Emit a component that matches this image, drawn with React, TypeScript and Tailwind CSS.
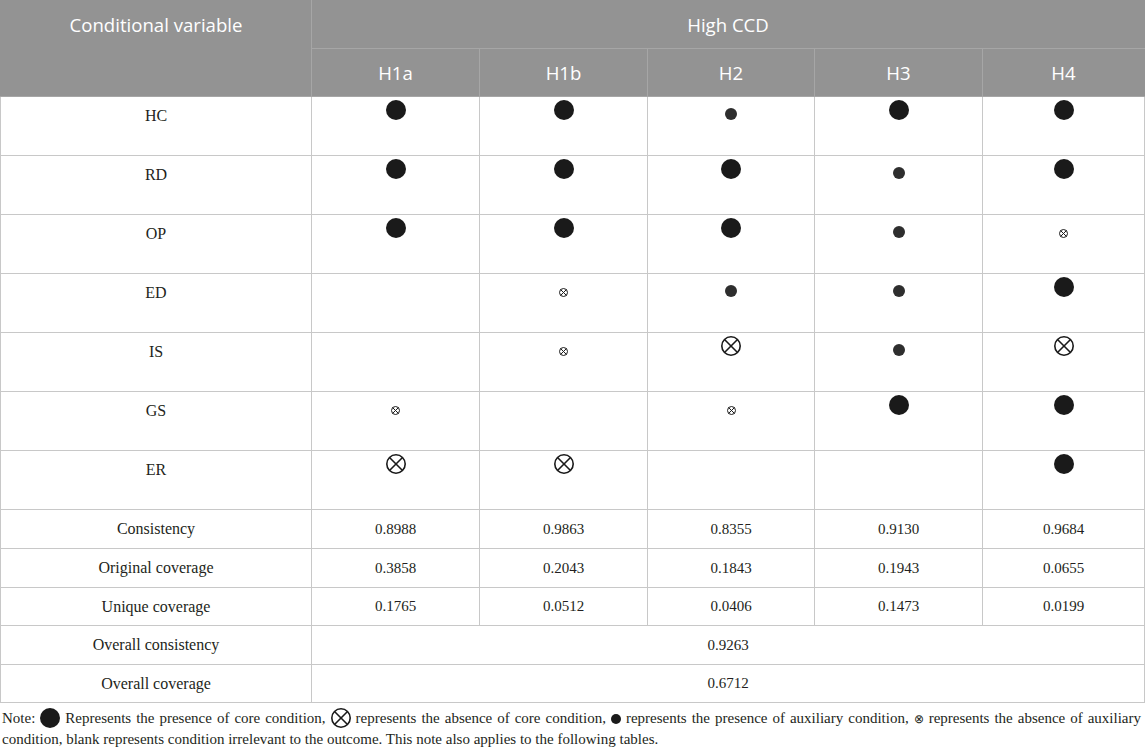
import React from "react";

type Sym = "B" | "s" | "X" | "x" | "";

const serif = "font-['Liberation_Serif','Times_New_Roman',serif]";
const sans = "font-['Open_Sans','Noto_Sans',sans-serif]";

function BigDot() {
  return <span className="inline-block w-[20px] h-[20px] rounded-full bg-[#1a1a1a] align-baseline" />;
}

function SmallDot() {
  return <span className="inline-block w-[12px] h-[12px] rounded-full bg-[#2e2e2e] align-baseline" />;
}

function CrossCircle({ size, stroke }: { size: number; stroke: number }) {
  const r = size / 2 - stroke / 2;
  const c = size / 2;
  const d = r * 0.7071;
  return (
    <svg width={size} height={size} viewBox={`0 0 ${size} ${size}`} className="inline-block align-baseline">
      <circle cx={c} cy={c} r={r} fill="none" stroke="#1a1a1a" strokeWidth={stroke} />
      <line x1={c - d} y1={c - d} x2={c + d} y2={c + d} stroke="#1a1a1a" strokeWidth={stroke} />
      <line x1={c + d} y1={c - d} x2={c - d} y2={c + d} stroke="#1a1a1a" strokeWidth={stroke} />
    </svg>
  );
}

function Symbol({ s }: { s: Sym }) {
  if (s === "B") return <BigDot />;
  if (s === "s") return <SmallDot />;
  if (s === "X") return <CrossCircle size={20} stroke={1.6} />;
  if (s === "x") return <CrossCircle size={9} stroke={1} />;
  return null;
}

const conditions: { name: string; cells: Sym[] }[] = [
  { name: "HC", cells: ["B", "B", "s", "B", "B"] },
  { name: "RD", cells: ["B", "B", "B", "s", "B"] },
  { name: "OP", cells: ["B", "B", "B", "s", "x"] },
  { name: "ED", cells: ["", "x", "s", "s", "B"] },
  { name: "IS", cells: ["", "x", "X", "s", "X"] },
  { name: "GS", cells: ["x", "", "x", "B", "B"] },
  { name: "ER", cells: ["X", "X", "", "", "B"] },
];

const stats = [
  { name: "Consistency", values: ["0.8988", "0.9863", "0.8355", "0.9130", "0.9684"], h: "h-[39px]" },
  { name: "Original coverage", values: ["0.3858", "0.2043", "0.1843", "0.1943", "0.0655"], h: "h-[39px]" },
  { name: "Unique coverage", values: ["0.1765", "0.0512", "0.0406", "0.1473", "0.0199"], h: "h-[38px]" },
];

const overall = [
  { name: "Overall consistency", value: "0.9263", h: "h-[39px]" },
  { name: "Overall coverage", value: "0.6712", h: "h-[38px]" },
];

const td = "border border-[#c8c8c8] text-center";

export default function App() {
  return (
    <div className="w-[1145px] bg-white text-[#231f20]">
      <table className={`w-[1145px] table-fixed border-collapse ${serif} text-[16px]`}>
        <colgroup>
          <col className="w-[311px]" />
          <col className="w-[168px]" />
          <col className="w-[168px]" />
          <col className="w-[167px]" />
          <col className="w-[168px]" />
          <col />
        </colgroup>
        <thead className={`${sans} text-white text-[18.6px] font-normal`}>
          <tr className="h-[48px] bg-[#939393]">
            <th rowSpan={2} className="border border-[#a6a6a6] border-l-[#939393] border-t-[#939393] align-top pt-[10px] font-normal leading-[28px]">
              Conditional variable
            </th>
            <th colSpan={5} className="border border-[#a6a6a6] border-t-[#939393] border-r-[#939393] font-normal">
              High CCD
            </th>
          </tr>
          <tr className="h-[48px] bg-[#939393]">
            {["H1a", "H1b", "H2", "H3", "H4"].map((h, i) => (
              <th key={h} className={`border border-[#a6a6a6] font-normal ${i === 4 ? "border-r-[#939393]" : ""}`}>
                {h}
              </th>
            ))}
          </tr>
        </thead>
        <tbody>
          {conditions.map((row) => (
            <tr key={row.name} className="h-[59px]">
              <td className={`${td} align-top pt-[8px] leading-[22px]`}>{row.name}</td>
              {row.cells.map((c, i) => (
                <td key={i} className={`${td} align-top`}>
                  <div className="flex h-[23px] items-end justify-center">
                    <Symbol s={c} />
                  </div>
                </td>
              ))}
            </tr>
          ))}
          {stats.map((row) => (
            <tr key={row.name} className={row.h}>
              <td className={td}>{row.name}</td>
              {row.values.map((v, i) => (
                <td key={i} className={`${td} text-[15px]`}>
                  {v}
                </td>
              ))}
            </tr>
          ))}
          {overall.map((row) => (
            <tr key={row.name} className={row.h}>
              <td className={td}>{row.name}</td>
              <td colSpan={5} className={`${td} text-[15px]`}>
                {row.value}
              </td>
            </tr>
          ))}
        </tbody>
      </table>
      <p className={`${serif} text-[15px] leading-[20px] pt-[5px] text-justify pr-[4px] pl-[2px]`}>
        Note: <span className="inline-block w-[20px] h-[20px] rounded-full bg-[#1a1a1a] align-[-5px]" /> Represents the presence of core condition,{" "}
        <span className="inline-block h-[20px] align-[-5px]">
          <CrossCircle size={20} stroke={1.6} />
        </span>{" "}
        represents the absence of core condition, <span className="inline-block w-[10px] h-[10px] rounded-full bg-[#1a1a1a] align-[-1px]" /> represents the presence
        of auxiliary condition, <span className="text-[12px]">⊗</span> represents the absence of auxiliary condition, blank represents condition irrelevant to the
        outcome. This note also applies to the following tables.
      </p>
    </div>
  );
}
